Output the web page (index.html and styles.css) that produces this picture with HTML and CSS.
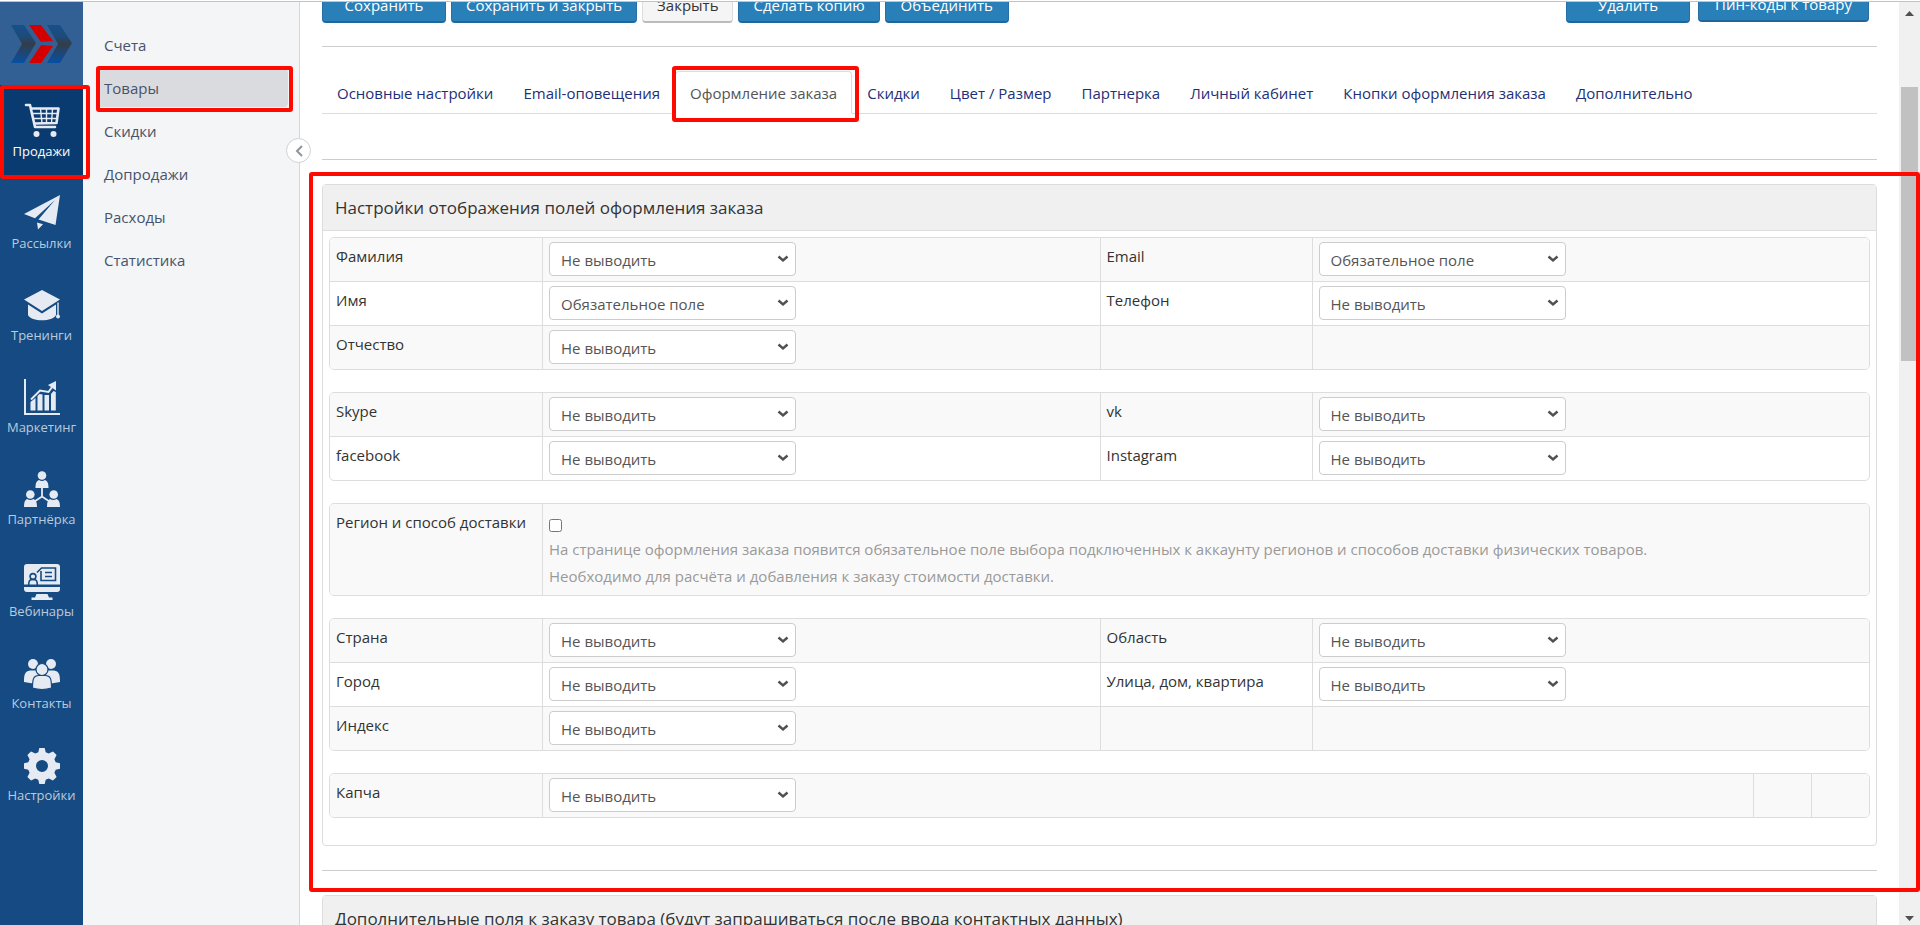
FILE: index.html
```html
<!DOCTYPE html>
<html lang="ru">
<head>
<meta charset="utf-8">
<title>Оформление заказа</title>
<link rel="stylesheet" href="styles.css">
</head>
<body>
<div class="topline"></div>
<div class="app">
  <nav class="rail" aria-label="Разделы">
    <a class="logo" href="#" aria-label="Главная">
      <svg width="62" height="38" viewBox="0 0 62 38">
        <defs><linearGradient id="steel" x1="0" y1="0" x2="0" y2="1"><stop offset="0" stop-color="#17508a"/><stop offset=".3" stop-color="#1d4b7a"/><stop offset=".5" stop-color="#343d47"/><stop offset=".7" stop-color="#20456e"/><stop offset="1" stop-color="#0650a4"/></linearGradient></defs>
        <path fill="url(#steel)" d="M0 0h13l12 18-12 20H0l11-19zM36 0h13l12 18-12 20H36l11-19z"/>
        <path fill="#d40000" d="M18 0h12l12 16-12 1zM30 20l12 1-12 17H18z"/>
      </svg>
    </a>
    <a class="rail-item is-active" href="#">
      <svg width="36" height="36" viewBox="0 0 36 36">
        <path fill="none" stroke="currentColor" stroke-width="2.6" stroke-linecap="round" stroke-linejoin="round" d="M2 2h4l5 22h20M8 5.500h26.500l-2 14.500L10.500 20.500"/>
        <path fill="none" stroke="currentColor" stroke-width="1.400" d="M16.500 6l1.500 14M22.500 6v14M28.500 6L27.500 20M8 10.500h26M9 15.500h24"/>
        <circle cx="12.500" cy="31" r="3" fill="currentColor"/><circle cx="29.500" cy="31" r="3" fill="currentColor"/>
      </svg>
      <span>Продажи</span>
    </a>
    <a class="rail-item" href="#">
      <svg width="36" height="36" viewBox="0 0 36 36" fill="currentColor"><path d="M36 0L0 19l11 4.200L31 5 14.500 24.500 31.500 30zM13 27.500l6 1.800-5 5.200z"/></svg>
      <span>Рассылки</span>
    </a>
    <a class="rail-item" href="#">
      <svg width="36" height="36" viewBox="0 0 36 36" fill="currentColor"><path d="M18 3L0 12.500 18 24l18-11.500zM4 17.500V28c3 7 25 7 28 0V17.500L18 26.500z"/><path d="M33.300 15.500h1.400V28h-1.400z"/><circle cx="34" cy="29.500" r="2"/></svg>
      <span>Тренинги</span>
    </a>
    <a class="rail-item" href="#">
      <svg width="36" height="36" viewBox="0 0 36 36" fill="currentColor"><path d="M0 0h2v34h34v2H0zM6.500 23l5-4v12.500h-5zM13.500 17l2-2 3 .5v16h-5zM20.500 16h4.500v15.500h-4.500zM27 15l2.500-3 2.300 1v18.500H27z"/><path fill="none" stroke="currentColor" stroke-width="2" d="M7 20.500l9-9 8.500 1.500 5-7"/><path d="M32 2v9.500L24 6z"/></svg>
      <span>Маркетинг</span>
    </a>
    <a class="rail-item" href="#">
      <svg width="36" height="36" viewBox="0 0 36 36" fill="currentColor"><circle cx="18" cy="4.500" r="4.300"/><path d="M11.500 17c0-5 1-7 3.500-8q3 2 6 0c2.500 1 3.500 3 3.500 8z"/><circle cx="6.300" cy="23.500" r="4.300"/><circle cx="29.700" cy="23.500" r="4.300"/><path d="M0 36c0-5 1-7 3-8q3.300 2 6.500 0c2.500 1 3.500 3 3.500 8zM23 36c0-5 1-7 3-8q3.300 2 6.500 0c2.500 1 3.500 3 3.500 8z"/><path fill="none" stroke="currentColor" stroke-width="1.800" d="M18 16v9.500M10.500 30.500l7.500-5 7.500 5"/></svg>
      <span>Партнёрка</span>
    </a>
    <a class="rail-item" href="#">
      <svg width="36" height="38" viewBox="0 0 36 38" fill="currentColor"><path d="M3 1h30q3 0 3 3v17.500H0V4q0-3 3-3zM0 24h36v2q0 3-3 3H3q-3 0-3-3zM12.500 31h11l1.500 3.500h3.500V37H7.500v-2.500H11z"/><g class="cut"><circle cx="9" cy="13.500" r="2.900"/><path d="M4.700 22c0-4.500 1-5.500 4.300-5.500s4.300 1 4.300 5.500M17 8v9.500h14.500V5h-14l-4.500 4.500M21 9.500h7M21 13.500h7"/></g></svg>
      <span>Вебинары</span>
    </a>
    <a class="rail-item" href="#">
      <svg width="36" height="36" viewBox="0 0 36 36" fill="currentColor"><circle cx="9" cy="9" r="5"/><circle cx="27" cy="9" r="5"/><path d="M0 27c0-8 1-10.500 6-11.500h6l3 4-6 9zM36 27c0-8-1-10.500-6-11.500h-6l-3 4 6 9z"/><g class="edge"><circle cx="18" cy="14.500" r="6"/><path d="M8.500 33c0-9 1-12.500 6-12.500h7c5 0 6 3.500 6 12.500q-9.500 3-19 0z"/></g></svg>
      <span>Контакты</span>
    </a>
    <a class="rail-item" href="#">
      <svg width="36" height="38" viewBox="0 0 36 38" fill="currentColor" fill-rule="evenodd"><path d="M15.300 1h5.400l1 4.300 3 1.300L29 4.400 32.600 8l-2.200 4.300 1.300 3L36 16.300v5.400l-4.300 1-1.300 3 2.200 4.300-3.600 3.600-4.300-2.200-3 1.300-1 4.300h-5.400l-1-4.300-3-1.300L7 33.600 3.400 30l2.200-4.300-1.300-3-4.300-1v-5.400l4.300-1 1.300-3L3.400 8 7 4.400l4.300 2.200 3-1.300zM18 13a6 6 0 1 0 0 12 6 6 0 0 0 0-12z"/></svg>
      <span>Настройки</span>
    </a>
  </nav>

  <aside class="side">
    <a class="side-item" href="#">Счета</a>
    <a class="side-item is-active" href="#">Товары</a>
    <a class="side-item" href="#">Скидки</a>
    <a class="side-item" href="#">Допродажи</a>
    <a class="side-item" href="#">Расходы</a>
    <a class="side-item" href="#">Статистика</a>
    <button class="collapse" type="button" aria-label="Свернуть меню"><svg width="8" height="12" viewBox="0 0 8 12"><path d="M7 1L2 6l5 5" fill="none" stroke="#8c959e" stroke-width="2"/></svg></button>
  </aside>

  <main class="main">
    <div class="toolbar">
      <button class="btn wide" type="button">Сохранить</button>
      <button class="btn" type="button">Сохранить и закрыть</button>
      <button class="btn btn-plain" type="button">Закрыть</button>
      <button class="btn" type="button">Сделать копию</button>
      <button class="btn wide" type="button">Объединить</button>
      <div class="toolbar-end">
        <button class="btn wide" type="button">Удалить</button>
        <a class="btn btn-link" href="#">Пин-коды к товару</a>
      </div>
    </div>
    <hr class="rule">
    <div class="tabs">
      <a class="tab" href="#">Основные настройки</a>
      <a class="tab" href="#">Email-оповещения</a>
      <a class="tab is-active" href="#">Оформление заказа</a>
      <a class="tab" href="#">Скидки</a>
      <a class="tab" href="#">Цвет / Размер</a>
      <a class="tab" href="#">Партнерка</a>
      <a class="tab" href="#">Личный кабинет</a>
      <a class="tab" href="#">Кнопки оформления заказа</a>
      <a class="tab" href="#">Дополнительно</a>
    </div>
    <hr class="rule">

    <section class="panel is-marked">
      <h2 class="panel-title">Настройки отображения полей оформления заказа</h2>
      <div class="panel-body">
        <table class="fields">
          <colgroup><col class="col-label"><col><col class="col-label"><col></colgroup>
          <tr><td><label for="f1">Фамилия</label></td><td><select id="f1"><option>Не выводить</option><option>Обязательное поле</option></select></td><td><label for="f2">Email</label></td><td><select id="f2"><option>Обязательное поле</option></select></td></tr>
          <tr><td><label for="f3">Имя</label></td><td><select id="f3"><option>Обязательное поле</option><option>Не выводить</option></select></td><td><label for="f4">Телефон</label></td><td><select id="f4"><option>Не выводить</option><option>Обязательное поле</option></select></td></tr>
          <tr><td><label for="f5">Отчество</label></td><td><select id="f5"><option>Не выводить</option><option>Обязательное поле</option></select></td><td></td><td></td></tr>
        </table>
        <table class="fields">
          <colgroup><col class="col-label"><col><col class="col-label"><col></colgroup>
          <tr><td><label for="f6">Skype</label></td><td><select id="f6"><option>Не выводить</option><option>Обязательное поле</option></select></td><td><label for="f7">vk</label></td><td><select id="f7"><option>Не выводить</option><option>Обязательное поле</option></select></td></tr>
          <tr><td><label for="f8">facebook</label></td><td><select id="f8"><option>Не выводить</option><option>Обязательное поле</option></select></td><td><label for="f9">Instagram</label></td><td><select id="f9"><option>Не выводить</option><option>Обязательное поле</option></select></td></tr>
        </table>
        <table class="fields">
          <colgroup><col class="col-label"><col></colgroup>
          <tr><td><label for="f10">Регион и способ доставки</label></td><td class="note-cell"><div class="check-line"><input class="check" type="checkbox" id="f10"></div><p class="note">На странице оформления заказа появится обязательное поле выбора подключенных к аккаунту регионов и способов доставки физических товаров.<br>Необходимо для расчёта и добавления к заказу стоимости доставки.</p></td></tr>
        </table>
        <table class="fields">
          <colgroup><col class="col-label"><col><col class="col-label"><col></colgroup>
          <tr><td><label for="f11">Страна</label></td><td><select id="f11"><option>Не выводить</option><option>Обязательное поле</option></select></td><td><label for="f12">Область</label></td><td><select id="f12"><option>Не выводить</option><option>Обязательное поле</option></select></td></tr>
          <tr><td><label for="f13">Город</label></td><td><select id="f13"><option>Не выводить</option><option>Обязательное поле</option></select></td><td><label for="f14">Улица, дом, квартира</label></td><td><select id="f14"><option>Не выводить</option><option>Обязательное поле</option></select></td></tr>
          <tr><td><label for="f15">Индекс</label></td><td><select id="f15"><option>Не выводить</option><option>Обязательное поле</option></select></td><td></td><td></td></tr>
        </table>
        <table class="fields">
          <colgroup><col class="col-label"><col><col class="col-narrow"><col class="col-narrow"></colgroup>
          <tr><td><label for="f16">Капча</label></td><td><select id="f16"><option>Не выводить</option></select></td><td></td><td></td></tr>
        </table>
      </div>
    </section>
    <hr class="rule">
    <section class="panel">
      <h2 class="panel-title">Дополнительные поля к заказу товара (будут запрашиваться после ввода контактных данных)</h2>
      <div class="panel-body"></div>
    </section>
  </main>

  <div class="scroll" aria-hidden="true">
    <svg class="scroll-arrow" width="9" height="5" viewBox="0 0 9 5"><path d="M0 5l4.500-5L9 5z" fill="#505050"/></svg>
    <div class="scroll-track"><div class="scroll-thumb"></div></div>
    <svg class="scroll-arrow" width="9" height="5" viewBox="0 0 9 5"><path d="M0 0l4.500 5L9 0z" fill="#505050"/></svg>
  </div>
</div>
</body>
</html>
```
FILE: styles.css
```css
* { box-sizing: border-box; }

body {
  margin: 0;
  height: 100vh;
  overflow: hidden;
  display: flex;
  flex-direction: column;
  background: #fff;
  color: #333;
  font: 15px/22px "Open Sans", "Noto Sans", sans-serif;
}

a { color: inherit; text-decoration: none; }

.topline {
  flex: none;
  height: 2px;
  background: #fff;
  border-bottom: 1px solid #c0c4c4;
  position: relative;
  z-index: 3;
}

.app { display: flex; flex: 1; min-height: 0; }

/* Icon rail */
.rail { flex: none; width: 83px; background: #154a82; color: #e6ebf3; }
.logo {
  display: flex;
  align-items: center;
  justify-content: center;
  height: 83px;
  background: #336094;
}
.rail-item {
  position: relative;
  display: flex;
  flex-direction: column;
  align-items: center;
  height: 92px;
  padding-top: 18px;
}
.rail-item svg { display: block; flex: none; height: 38px; }
.rail-item svg[height="36"] { height: 36px; margin-bottom: 2px; }
.rail-item span { font-size: 13px; line-height: 20px; color: #bccbdc; }
.rail-item.is-active { background: #0a3b70; }
.rail-item.is-active span { color: #fff; }
.cut { fill: none; stroke: #154a82; stroke-width: 1.6; }
.edge { stroke: #154a82; stroke-width: 1.2; }

/* Section menu */
.side {
  flex: none;
  position: relative;
  width: 217px;
  padding: 24px 11px 0 13px;
  background: #f3f5f7;
  border-right: 1px solid #d5d8db;
}
.side-item {
  position: relative;
  display: block;
  height: 38px;
  margin-bottom: 5px;
  padding-left: 8px;
  border-radius: 4px;
  line-height: 38px;
  color: #47536b;
}
.side-item.is-active { background: #dadbdf; }
.collapse {
  position: absolute;
  top: 136px;
  right: -12px;
  z-index: 2;
  display: flex;
  align-items: center;
  justify-content: center;
  width: 25px;
  height: 25px;
  padding: 0;
  border: 1px solid #cfd2d5;
  border-radius: 50%;
  background: #fff;
}

/* Red frames round highlighted parts */
.rail-item.is-active::after,
.side-item.is-active::after,
.tab.is-active::after,
.is-marked::after {
  content: "";
  position: absolute;
  z-index: 2;
  border: 4px solid #ff0a00;
  border-radius: 3px;
  pointer-events: none;
}
.rail-item.is-active::after { inset: 0 -7px -2px 0; }
.side-item.is-active::after { inset: -3px -5px -5px 0; }
.tab.is-active::after { inset: -6px -8px -9px -4px; }
.is-marked::after { inset: -13px -44px -47px -14px; }

/* Content */
.main { flex: 1; min-width: 0; padding: 0 22px; }
.toolbar { display: flex; gap: 5px; margin-top: -13px; height: 33px; align-items: flex-start; }
.toolbar-end { display: flex; gap: 8px; margin-left: auto; padding-right: 8px; align-items: flex-start; }
.btn {
  height: 34px;
  padding: 0 14px;
  border: 1px solid #2471a8;
  border-bottom: 2px solid #1f6699;
  border-radius: 4px;
  background: #2980b9;
  color: #fff;
  font: inherit;
  line-height: 31px;
  white-space: nowrap;
}
.wide { min-width: 124px; }
.btn-plain { background: #f5f5f5; border-color: #ddd #ddd #bbb; color: #333; }
.btn-link { height: 33px; padding: 0 16px; line-height: 28px; }

.rule { height: 1px; margin: 24px 0; border: 0; background: #ccc; }

.tabs { display: flex; height: 43px; border-bottom: 1px solid #ddd; }
.tab {
  position: relative;
  height: 43px;
  padding: 0 14px;
  border: 1px solid transparent;
  border-radius: 4px 4px 0 0;
  line-height: 42px;
  color: #1f2f77;
  white-space: nowrap;
}
.tab.is-active { background: #fff; border-color: #ddd #ddd #fff; color: #555; }
.tabs + .rule { margin-top: 45px; }

.panel { position: relative; border: 1px solid #ddd; border-radius: 4px; }
.panel-title {
  margin: 0;
  padding: 0 12px;
  border-bottom: 1px solid #ddd;
  background: #f0f0f0;
  font-size: 17px;
  font-weight: 400;
  line-height: 45px;
}
.panel-body { padding: 6px 6px 5px; }

.fields {
  width: 100%;
  margin-bottom: 22px;
  table-layout: fixed;
  border: 1px solid #ddd;
  border-radius: 5px;
  border-spacing: 0;
  overflow: hidden;
}
.col-label { width: 212px; }
.col-narrow { width: 58px; }
.fields td {
  height: 43px;
  padding: 4px 6px;
  vertical-align: top;
}
.fields td + td { border-left: 1px solid #ddd; }
.fields tr + tr td { height: 44px; border-top: 1px solid #ddd; }
.fields tr:nth-child(odd) td { background: #f9f9f9; }
.fields label { display: block; padding-top: 3px; white-space: nowrap; }

select {
  display: block;
  appearance: none;
  width: 247px;
  height: 34px;
  padding: 2px 30px 0 11px;
  border: 1px solid #ccc;
  border-radius: 4px;
  background: #fff url("data:image/svg+xml,%3Csvg xmlns='http://www.w3.org/2000/svg' width='12' height='8' viewBox='0 0 12 8'%3E%3Cpath d='M1.500 1.500l4.500 4 4.500-4' fill='none' stroke='%23505050' stroke-width='2.400'/%3E%3C/svg%3E") no-repeat right 6px center;
  color: #555;
  font: inherit;
}

.fields .note-cell { padding: 5px 6px; }
.check-line { display: flex; align-items: center; height: 27px; padding-top: 5px; }
.check { width: 13px; height: 13px; margin: 0; }
.note { margin: 0; line-height: 27px; color: #999; }

/* Page scrollbar */
.scroll {
  flex: none;
  width: 21px;
  padding: 9px 2px 4px;
  display: flex;
  flex-direction: column;
  align-items: center;
  background: #f0f0f0;
}
.scroll-arrow { flex: none; }
.scroll-track { flex: 1; width: 17px; padding: 71px 0 0; }
.scroll-thumb { height: 33%; background: #c1c1c1; }
```
